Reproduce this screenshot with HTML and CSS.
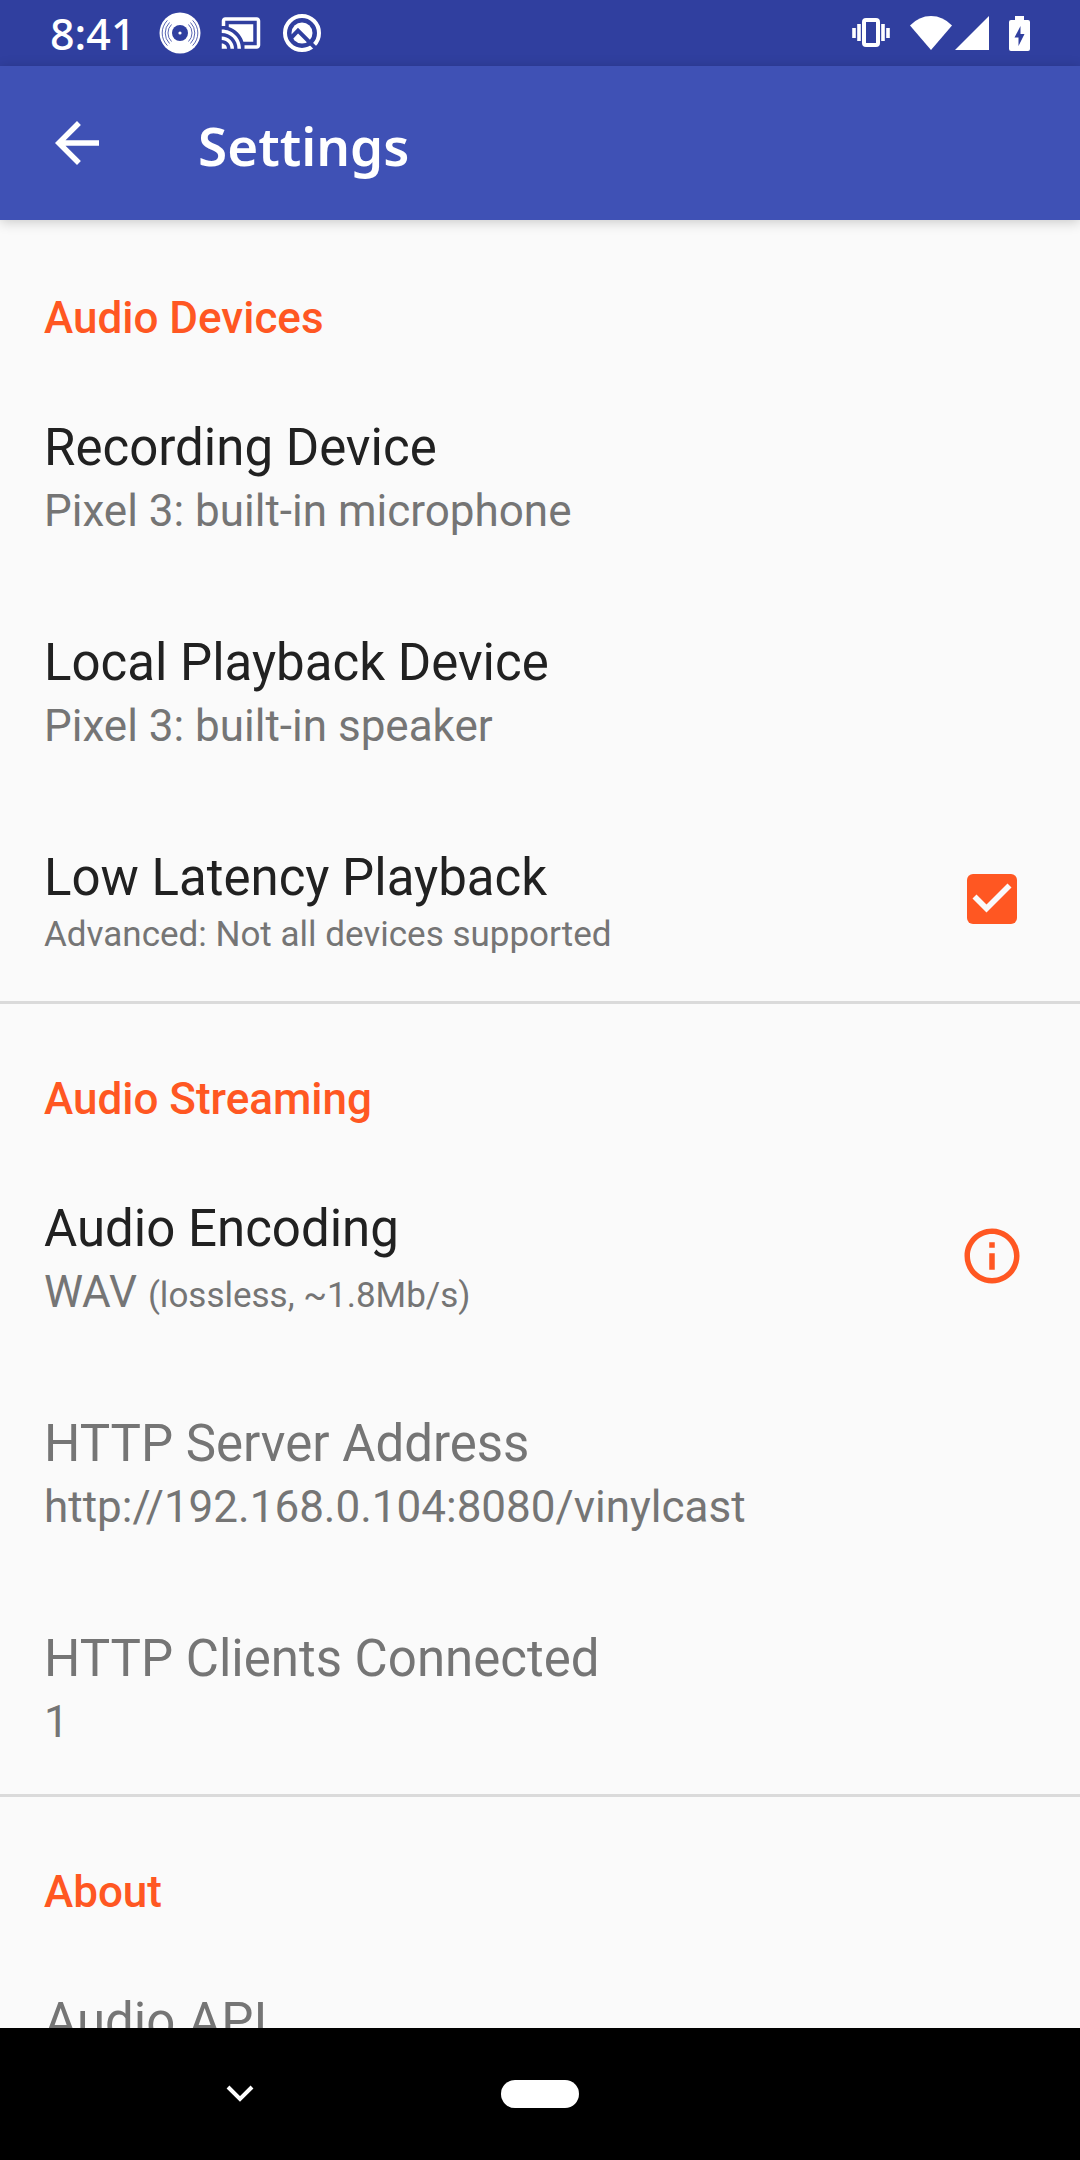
FILE: index.html
```html
<!DOCTYPE html>
<html lang="en">
<head>
<meta charset="utf-8">
<meta name="viewport" content="width=device-width, initial-scale=1">
<title>Settings</title>
<link rel="stylesheet" href="styles.css">
</head>
<body>
<div class="status-bar">
  <span class="clock">8:41</span>
  <div class="notifications">
    <svg class="status-icon" viewBox="0 0 42 42" aria-hidden="true">
      <circle cx="21" cy="21" r="20.5" fill="#fff"/>
      <circle cx="21" cy="21" r="8" fill="#303f9f"/>
      <circle cx="21" cy="21" r="1.6" fill="#fff"/>
      <g fill="none" stroke="#303f9f" stroke-width=".8">
        <path d="M12.5 12.5a12 12 0 0 0 0 17M10.5 10.5a15 15 0 0 0 0 21M8.400 8.400a17.800 17.800 0 0 0 0 25.200"/>
        <path d="M29.500 12.500a12 12 0 0 1 0 17M31.500 10.500a15 15 0 0 1 0 21M33.600 8.400a17.800 17.800 0 0 1 0 25.200"/>
      </g>
    </svg>
    <svg class="status-icon" viewBox="0 0 24 24" aria-hidden="true">
      <path fill="#fff" d="M21 3H3c-1.100 0-2 .9-2 2v3h2V5h18v14h-7v2h7c1.100 0 2-.9 2-2V5c0-1.100-.9-2-2-2zM1 18v3h3c0-1.660-1.340-3-3-3zm0-4v2c2.760 0 5 2.240 5 5h2c0-3.870-3.130-7-7-7zm0-4v2c4.970 0 9 4.030 9 9h2c0-6.080-4.930-11-11-11zM5 7v1.630c3.960 1.280 7.090 4.410 8.370 8.370H19V7H5z"/>
    </svg>
    <svg class="status-icon" viewBox="0 0 42 42" aria-hidden="true">
      <circle cx="21" cy="21" r="17" fill="none" stroke="#fff" stroke-width="4"/>
      <circle cx="21" cy="21" r="10.500" fill="#fff"/>
      <path d="M9.500 26.500l7.500-7.800L35.500 37.200" fill="none" stroke="#303f9f" stroke-width="4"/>
    </svg>
  </div>
  <div class="system-icons">
    <svg class="icon-vibrate" viewBox="0 0 38 30" aria-hidden="true">
      <rect x="12" y="2" width="14" height="25" rx="2" fill="none" stroke="#fff" stroke-width="4"/>
      <path d="M2 10v10M7 6v17M31 6v17M36 10v10" stroke="#fff" stroke-width="3.600"/>
    </svg>
    <svg class="icon-wifi" viewBox="0 0 42 34" aria-hidden="true">
      <path d="M0 9.500Q9 0 21 0t21 9.500L21 34z" fill="#fff"/>
    </svg>
    <svg class="icon-signal" viewBox="0 0 34 34" aria-hidden="true">
      <path d="M34 0v34H0z" fill="#fff"/>
    </svg>
    <svg class="icon-battery" viewBox="0 0 21 35" aria-hidden="true">
      <path d="M6 0h9v4h4q2 0 2 2v27q0 2-2 2H2q-2 0-2-2V6q0-2 2-2h4z" fill="#fff"/>
      <path d="M11.500 10L5.500 21.500h4V30l6-12h-4z" fill="#303f9f"/>
    </svg>
  </div>
</div>

<header class="app-bar">
  <button class="back" type="button" aria-label="Back">
    <svg class="back-icon" viewBox="0 0 24 24" aria-hidden="true">
      <path fill="#fff" d="M20 11H7.830l5.590-5.590L12 4l-8 8 8 8 1.410-1.410L7.830 13H20v-2z"/>
    </svg>
  </button>
  <h1 class="title">Settings</h1>
</header>

<main class="settings">
  <section class="group">
    <h2 class="group-title">Audio Devices</h2>
    <button class="pref" type="button">
      <span class="pref-text">
        <span class="pref-title">Recording Device</span>
        <span class="pref-summary">Pixel 3: built-in microphone</span>
      </span>
    </button>
    <button class="pref" type="button">
      <span class="pref-text">
        <span class="pref-title">Local Playback Device</span>
        <span class="pref-summary">Pixel 3: built-in speaker</span>
      </span>
    </button>
    <label class="pref" for="low-latency">
      <span class="pref-text">
        <span class="pref-title">Low Latency Playback</span>
        <span class="pref-note">Advanced: Not all devices supported</span>
      </span>
      <span class="pref-action"><input class="check" type="checkbox" id="low-latency" checked></span>
    </label>
  </section>

  <section class="group">
    <h2 class="group-title">Audio Streaming</h2>
    <div class="pref">
      <span class="pref-text">
        <span class="pref-title">Audio Encoding</span>
        <span class="pref-summary">WAV <small class="detail">(lossless, ~1.8Mb/s)</small></span>
      </span>
      <button class="pref-action" type="button" aria-label="About audio encoding">
        <svg class="info-icon" viewBox="0 0 24 24" aria-hidden="true">
          <path fill="#ff5722" d="M11 7h2v2h-2zm0 4h2v6h-2zm1-9C6.480 2 2 6.480 2 12s4.480 10 10 10 10-4.480 10-10S17.520 2 12 2zm0 18c-4.410 0-8-3.590-8-8s3.590-8 8-8 8 3.590 8 8-3.590 8-8 8z"/>
        </svg>
      </button>
    </div>
    <div class="pref pref-disabled">
      <span class="pref-text">
        <span class="pref-title">HTTP Server Address</span>
        <span class="pref-summary">http://192.168.0.104:8080/vinylcast</span>
      </span>
    </div>
    <div class="pref pref-disabled">
      <span class="pref-text">
        <span class="pref-title">HTTP Clients Connected</span>
        <span class="pref-summary">1</span>
      </span>
    </div>
  </section>

  <section class="group">
    <h2 class="group-title">About</h2>
    <div class="pref pref-disabled">
      <span class="pref-text">
        <span class="pref-title">Audio API</span>
      </span>
    </div>
  </section>
</main>

<nav class="nav-bar" aria-label="System navigation">
  <button class="nav-button" type="button" aria-label="Hide">
    <svg class="chevron" viewBox="0 0 28 18" aria-hidden="true">
      <path d="M2 2l12 12L26 2" fill="none" stroke="#fff" stroke-width="4"/>
    </svg>
  </button>
  <button class="nav-button" type="button" aria-label="Home"><span class="pill"></span></button>
</nav>
</body>
</html>
```
FILE: styles.css
```css
* {
  box-sizing: border-box;
}

body {
  margin: 0;
  height: 100vh;
  display: flex;
  flex-direction: column;
  background: #fafafa;
  color: #212121;
  font-family: Roboto, sans-serif;
}

button {
  margin: 0;
  padding: 0;
  border: 0;
  background: none;
  color: inherit;
  font: inherit;
  text-align: left;
}

svg {
  display: block;
}

/* Status bar */
.status-bar {
  flex: none;
  display: flex;
  align-items: center;
  height: 66px;
  padding: 0 50px;
  background: #303f9f;
  color: #fff;
}

.clock {
  padding-top: 2px;
  font: 500 43px/50px "Noto Sans", sans-serif;
}

.notifications {
  display: flex;
  gap: 19px;
  margin-left: 24px;
}

.status-icon {
  width: 42px;
  height: 42px;
}

.system-icons {
  display: flex;
  align-items: center;
  margin-left: auto;
}

.icon-vibrate {
  width: 38px;
  height: 30px;
  margin-right: 20px;
}

.icon-wifi {
  width: 42px;
  height: 34px;
  margin-right: 3px;
}

.icon-signal {
  width: 34px;
  height: 34px;
  margin-right: 20px;
}

.icon-battery {
  width: 21px;
  height: 35px;
}

/* App bar */
.app-bar {
  flex: none;
  position: relative;
  display: flex;
  align-items: center;
  height: 154px;
  padding: 0 44px;
  background: #3f51b5;
  color: #fff;
  box-shadow: 0 2px 12px rgba(0, 0, 0, 0.2);
}

.back-icon {
  width: 66px;
  height: 66px;
}

.title {
  margin: 0 0 0 88px;
  padding-top: 6px;
  font: 600 53px/74px "Noto Sans", sans-serif;
}

/* Preference list */
.settings {
  flex: 1;
  min-height: 0;
  padding-top: 3px;
  overflow-y: auto;
  scrollbar-width: none;
}

.group + .group {
  border-top: 3px solid #dadada;
}

.group-title {
  margin: 0;
  padding: 69px 44px 24px;
  color: #ff5722;
  font-size: 44px;
  font-weight: 500;
  line-height: 52px;
}

.pref {
  display: flex;
  align-items: center;
  justify-content: space-between;
  width: 100%;
  padding: 0 55px 0 44px;
}

.pref-text {
  display: flex;
  flex-direction: column;
  gap: 4px;
  padding: 50px 0 43px;
}

.pref-title {
  font-size: 51px;
  line-height: 60px;
}

.pref-summary {
  color: #757575;
  font-size: 44px;
  line-height: 58px;
}

.pref-note {
  color: #757575;
  font-size: 35px;
  line-height: 46px;
}

.detail {
  font-size: 35px;
  line-height: 46px;
}

.pref-disabled {
  color: #757575;
}

.pref-action {
  display: flex;
  align-items: center;
  justify-content: center;
  width: 66px;
  height: 66px;
  margin-bottom: 2px;
}

.check {
  appearance: none;
  width: 50px;
  height: 50px;
  margin: 0;
  border-radius: 6px;
  border: 5px solid #757575;
}

.check:checked {
  border: 0;
  background: #ff5722;
}

.check:checked::before {
  content: "";
  display: block;
  width: 100%;
  height: 100%;
  background: #fafafa;
  clip-path: polygon(39% 78%, 11% 50%, 19% 42%, 39% 62%, 81% 20%, 89% 28%);
}

.info-icon {
  width: 66px;
  height: 66px;
}

/* Navigation bar */
.nav-bar {
  flex: none;
  display: grid;
  grid-template-columns: repeat(3, 1fr);
  height: 132px;
  padding: 0 90px;
  background: #000;
}

.nav-button {
  display: flex;
  align-items: center;
  justify-content: center;
}

.chevron {
  width: 28px;
  height: 18px;
}

.pill {
  width: 78px;
  height: 28px;
  border-radius: 14px;
  background: #fff;
}
```
